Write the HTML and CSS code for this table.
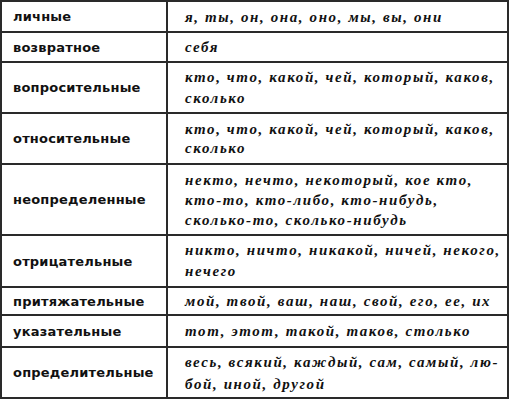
FILE: index.html
```html
<!DOCTYPE html>
<html lang="ru">
<head>
<meta charset="utf-8">
<link rel="stylesheet" href="styles.css">
</head>
<body>
<table class="pron">
  <tr class="r1"><td class="kind">личные</td><td class="words">я, ты, он, она, оно, мы, вы, они</td></tr>
  <tr class="r2"><td class="kind">возвратное</td><td class="words">себя</td></tr>
  <tr class="r3"><td class="kind">вопросительные</td><td class="words">кто, что, какой, чей, который, каков,<br>сколько</td></tr>
  <tr class="r4"><td class="kind">относительные</td><td class="words">кто, что, какой, чей, который, каков,<br>сколько</td></tr>
  <tr class="r5"><td class="kind">неопределенные</td><td class="words">некто, нечто, некоторый, кое кто,<br>кто-то, кто-либо, кто-нибудь,<br>сколько-то, сколько-нибудь</td></tr>
  <tr class="r6"><td class="kind">отрицательные</td><td class="words">никто, ничто, никакой, ничей, некого,<br>нечего</td></tr>
  <tr class="r7"><td class="kind">притяжательные</td><td class="words">мой, твой, ваш, наш, свой, его, ее, их</td></tr>
  <tr class="r8"><td class="kind">указательные</td><td class="words">тот, этот, такой, таков, столько</td></tr>
  <tr class="r9"><td class="kind">определительные</td><td class="words">весь, всякий, каждый, сам, самый, лю-<br>бой, иной, другой</td></tr>
</table>
</body>
</html>
```
FILE: styles.css
```css
html, body {
  margin: 0;
  padding: 0;
  background: #ffffff;
}
.pron {
  border-collapse: collapse;
  table-layout: fixed;
  width: 509px;
  margin: 0;
  color: #111;
}
.pron td {
  border: 2px solid #2a2a2a;
  padding: 0;
  vertical-align: middle;
  white-space: nowrap;
}
.kind {
  width: 153px;
  padding-left: 11px !important;
  font-family: "DejaVu Sans", sans-serif;
  font-weight: bold;
  font-size: 13px;
  letter-spacing: 0.2px;
}
.words {
  padding-left: 17px !important;
  font-family: "Liberation Serif", serif;
  font-style: italic;
  font-weight: bold;
  font-size: 15px;
  letter-spacing: 1.6px;
  line-height: 20px;
}
.r3 .words, .r6 .words { line-height: 21px; }
.r4 .words { line-height: 19px; }
.r9 .words { line-height: 22px; }
.r1 { height: 31px; }
.r2 { height: 30px; }
.r3 { height: 51px; }
.r4 { height: 51px; }
.r5 { height: 71px; }
.r6 { height: 52px; }
.r7 { height: 28px; }
.r8 { height: 32px; }
.r9 { height: 51px; }
.r6 td { border-top-color: #777; }
.r7 td, .r8 td { border-top-color: #555; }
.r9 td { border-top-color: #111; }
```
